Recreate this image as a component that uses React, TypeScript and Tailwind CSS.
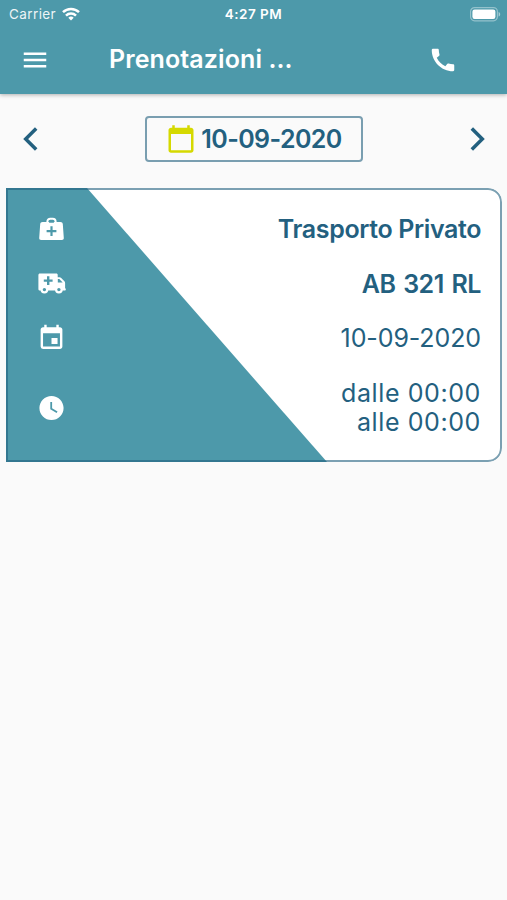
import type { ReactNode } from "react"
import { MdCalendarToday, MdCall, MdEvent, MdMenu, MdWatchLater } from "react-icons/md"

function WifiIcon() {
  return (
    <svg width="18" height="14" viewBox="0 0 18 14" fill="none" stroke="white" strokeWidth="2.5">
      <path d="M1 5.2a11.4 11.4 0 0 1 16 0" />
      <path d="M4 8.6a7.1 7.1 0 0 1 10 0" />
      <path d="M9 13.6 6.3 10.8a3.8 3.8 0 0 1 5.4 0z" fill="white" stroke="none" />
    </svg>
  )
}

function BatteryIcon() {
  return (
    <svg width="31" height="15" viewBox="0 0 31 15">
      <rect x="0.6" y="0.6" width="26.8" height="13.2" rx="4" fill="none" stroke="white" strokeOpacity="0.4" strokeWidth="1.2" />
      <rect x="2.4" y="2.6" width="23" height="9.4" rx="2.2" fill="white" />
      <path d="M28.6 5v4.6c1-.4 1.6-1.2 1.6-2.3s-.6-1.9-1.6-2.3z" fill="white" fillOpacity="0.5" />
    </svg>
  )
}

function ChevronIcon({ className }: { className?: string }) {
  return (
    <svg width="15" height="24" viewBox="0 0 15 24" className={className}>
      <path d="M13.2 1.5 2.7 12l10.5 10.5" fill="none" stroke="currentColor" strokeWidth="3.5" />
    </svg>
  )
}

function MedicalBagIcon() {
  return (
    <svg width="25" height="24" viewBox="0 0 25 24">
      <path d="M8.4 7V4.6C8.4 2.8 9.7 1.7 11.2 1.7h2.6c1.5 0 2.8 1.1 2.8 2.9V7" fill="none" stroke="white" strokeWidth="2" />
      <path d="M3.6 5h17.8c1.4 0 2.3.8 2.4 2.1l1 14c.1 1.2-.7 2-1.9 2H2.1c-1.2 0-2-.8-1.9-2l1-14C1.3 5.8 2.2 5 3.6 5z" fill="white" />
      <path d="M10.1 4.4c0-.6.4-1 1-1h2.8c.6 0 1 .4 1 1v1.3h-4.8z" fill="#4d99aa" />
      <path d="M12.5 9.3v9.8M7.6 14.2h9.8" stroke="#4d99aa" strokeWidth="2.2" />
    </svg>
  )
}

function AmbulanceIcon() {
  return (
    <svg width="28" height="21" viewBox="0 0 28 21">
      <path
        d="M2 .5h16.3c.9 0 1.4.6 1.4 1.4v2.3h1.8c.7 0 1.2.2 1.7.7l3.2 3.3c.5.5.7 1 .7 1.7v5.4c.5.1.7.4.7.9v.5c0 .5-.3.8-.8.8H2c-1 0-1.6-.6-1.6-1.6V2.1C.4 1.1 1 .5 2 .5z"
        fill="white"
      />
      <path d="M19.8 6.1h1.5l3.4 3.5h-4.9z" fill="#4d99aa" />
      <path d="M10.2 3.2v8.8M5.8 7.6h8.8" stroke="#4d99aa" strokeWidth="2.4" />
      <circle cx="6.4" cy="16.6" r="2.8" fill="#4d99aa" stroke="white" strokeWidth="2.2" />
      <circle cx="20.9" cy="16.6" r="2.8" fill="#4d99aa" stroke="white" strokeWidth="2.2" />
    </svg>
  )
}

interface BookingRowProps {
  icon: ReactNode
  className: string
  children: ReactNode
}

function BookingRow({ icon, className, children }: BookingRowProps) {
  return (
    <div className={`flex items-center justify-between ${className}`}>
      <div className="flex w-[29px] shrink-0 justify-center text-white">{icon}</div>
      <div className="pt-px text-right">{children}</div>
    </div>
  )
}

export default function App() {
  return (
    <div className="min-h-[900px] w-full bg-[#fafafa] font-['Inter',sans-serif] text-[#23607f]">
      <header className="relative h-[94px] bg-[#4d99aa] text-white shadow-[0_1px_4px_rgba(0,0,0,0.3)]">
        <div className="grid h-[28px] grid-cols-3 items-center pr-[6px] pl-[9px] text-[13.5px]">
          <div className="flex items-center gap-[6px]">
            <span className="tracking-[0.4px] opacity-90">Carrier</span>
            <WifiIcon />
          </div>
          <span className="-ml-[3px] text-center font-semibold tracking-[0.5px]">4:27 PM</span>
          <div className="flex justify-end">
            <BatteryIcon />
          </div>
        </div>
        <div className="flex h-[64px] items-center pl-5">
          <MdMenu size={30} />
          <h1 className="ml-[59px] flex-1 text-[25px] font-semibold tracking-[0.1px]">Prenotazioni ...</h1>
          <MdCall size={30} className="mr-[49px]" />
        </div>
      </header>

      <div className="flex items-center justify-between pt-[22px] pr-[22px] pl-[23px]">
        <ChevronIcon />
        <div className="flex h-[46px] w-[218px] items-center justify-center gap-[5px] rounded-[4px] border-2 border-[#23607f]/60">
          <MdCalendarToday size={30} className="text-[#d5d900]" />
          <span className="pt-px text-[25px] font-semibold tracking-[-0.6px]">10-09-2020</span>
        </div>
        <ChevronIcon className="rotate-180" />
      </div>

      <div className="relative mt-[26px] mr-[5px] ml-[6px] h-[274px] overflow-hidden rounded-r-[14px] bg-white">
        <svg className="absolute inset-0" width="330" height="274" viewBox="0 0 330 274">
          <path d="M0 0h81l240 274H0z" fill="#4d99aa" />
        </svg>
        <div className="pointer-events-none absolute inset-0 rounded-r-[14px] border-2 border-[#23607f]/60" />
        <div className="relative pt-[14px] pr-[21px] pl-[31px] text-[25px] leading-[29px]">
          <BookingRow className="h-[54px] font-semibold tracking-[-0.38px]" icon={<MedicalBagIcon />}>
            Trasporto Privato
          </BookingRow>
          <BookingRow className="h-[55px] font-semibold tracking-[-0.5px] [word-spacing:2px]" icon={<AmbulanceIcon />}>
            AB 321 RL
          </BookingRow>
          <BookingRow className="h-[54px] tracking-[-0.1px]" icon={<MdEvent size={30} />}>
            10-09-2020
          </BookingRow>
          <BookingRow className="h-[85px] tracking-[0.6px]" icon={<MdWatchLater size={30} />}>
            <p>dalle 00:00</p>
            <p>alle 00:00</p>
          </BookingRow>
        </div>
      </div>
    </div>
  )
}
